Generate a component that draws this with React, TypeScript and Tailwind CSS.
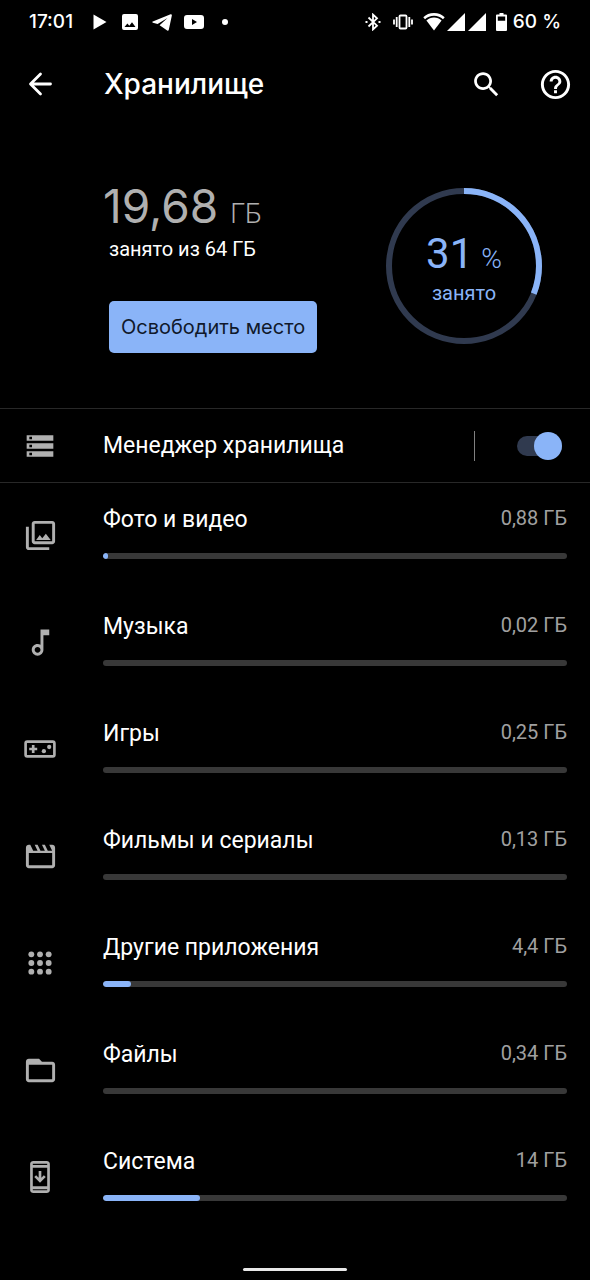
import React, { useState } from 'react';

type IconProps = { className?: string; children: React.ReactNode };

const Icon: React.FC<IconProps> = ({ className = 'size-8', children }) => (
  <svg viewBox="0 0 24 24" fill="currentColor" className={className} aria-hidden="true">
    {children}
  </svg>
);

const categories = [
  {
    name: 'Фото и видео',
    size: '0,88 ГБ',
    percent: 1,
    iconSize: 'size-[35px]',
    icon: (
      <path d="M20 4v12H8V4h12m0-2H8c-1.100 0-2 .9-2 2v12c0 1.100.9 2 2 2h12c1.100 0 2-.9 2-2V4c0-1.100-.9-2-2-2zm-8.500 9.670 1.690 2.260 2.480-3.100L19 15H9zM2 6v14c0 1.100.9 2 2 2h14v-2H4V6H2z" />
    ),
  },
  {
    name: 'Музыка',
    size: '0,02 ГБ',
    percent: 0,
    iconSize: 'size-[35px]',
    icon: (
      <path d="M12 3v10.550c-.59-.34-1.270-.55-2-.55-2.210 0-4 1.790-4 4s1.790 4 4 4 4-1.790 4-4V7h4V3h-6zm-2 16c-1.100 0-2-.9-2-2s.9-2 2-2 2 .9 2 2-.9 2-2 2z" />
    ),
  },
  {
    name: 'Игры',
    size: '0,25 ГБ',
    percent: 0,
    iconSize: 'size-8',
    icon: (
      <>
        <rect x="1.200" y="6.500" width="21.600" height="11" rx="1.200" fill="none" stroke="currentColor" strokeWidth="2" />
        <path d="M5.900 9h2v2h2v2h-2v2h-2v-2h-2v-2h2z" />
        <circle cx="14.900" cy="13.600" r="1.600" />
        <circle cx="18.900" cy="10.500" r="1.600" />
      </>
    ),
  },
  {
    name: 'Фильмы и сериалы',
    size: '0,13 ГБ',
    percent: 0,
    iconSize: 'size-[35px]',
    icon: (
      <path d="M18 4l2 4h-3l-2-4h-2l2 4h-3l-2-4H8l2 4H7L5 4H4c-1.100 0-1.990.9-1.990 2L2 18c0 1.100.9 2 2 2h16c1.100 0 2-.9 2-2V6c0-1.100-.9-2-2-2h-2zm2 14H4V9.600h16V18z" />
    ),
  },
  {
    name: 'Другие приложения',
    size: '4,4 ГБ',
    percent: 6,
    iconSize: 'size-8',
    icon: (
      <>
        {[5.5, 12, 18.5].map((cy) =>
          [5.5, 12, 18.5].map((cx) => <circle key={`${cx}-${cy}`} cx={cx} cy={cy} r="2.200" />)
        )}
      </>
    ),
  },
  {
    name: 'Файлы',
    size: '0,34 ГБ',
    percent: 0,
    iconSize: 'size-[35px]',
    icon: (
      <path d="M20 6h-7l-2-2H4c-1.100 0-1.990.9-1.990 2L2 18c0 1.100.9 2 2 2h16c1.100 0 2-.9 2-2V8c0-1.100-.9-2-2-2zm0 12H4V8h16v10z" />
    ),
  },
  {
    name: 'Система',
    size: '14 ГБ',
    percent: 21,
    iconSize: 'size-8',
    icon: (
      <>
        <path
          fillRule="evenodd"
          d="M17 0H7C5.700 0 4.600.9 4.600 2v20c0 1.100 1.100 2 2.400 2h10c1.300 0 2.400-.9 2.400-2V2c0-1.100-1.100-2-2.400-2zm.4 22H6.600v-.9h10.800zm0-3H6.600V5h10.800zm0-16H6.600v-.9h10.800z"
        />
        <path d="M11 7.500h2v5l1.900-1.900 1.400 1.400-4.300 4.300L7.700 12l1.400-1.400 1.900 1.900z" />
      </>
    ),
  },
];

const StatusBar: React.FC = () => (
  <div className="flex h-11 items-center justify-between px-[29px] font-['Inter',sans-serif] text-[19px] font-medium">
    <div className="flex items-center">
      <span>17:01</span>
      <svg viewBox="0 0 14 16" className="ml-5 h-4 w-3.5" fill="currentColor" aria-hidden="true">
        <path d="M.5.5v15L13.500 8z" />
      </svg>
      <svg viewBox="0 0 16 16" className="ml-[15px] size-4" fill="currentColor" aria-hidden="true">
        <path fillRule="evenodd" d="M2 0h12a2 2 0 0 1 2 2v12a2 2 0 0 1-2 2H2a2 2 0 0 1-2-2V2a2 2 0 0 1 2-2zm.5 13h11L10 8.200l-2.700 3.500-1.900-2.300z" />
      </svg>
      <svg viewBox="0 0 20 17" className="ml-3.5 h-[17px] w-5" fill="currentColor" aria-hidden="true">
        <path d="M.8 7.500 18.600.3c.8-.3 1.500.2 1.200 1.400l-3 14.100c-.2 1-.9 1.200-1.600.8L7.600 11.200 15.500 4 5.600 10.100.9 8.700c-.9-.3-.9-.9-.1-1.200z" />
      </svg>
      <svg viewBox="0 0 20 14" className="ml-3 h-3.5 w-5" fill="currentColor" aria-hidden="true">
        <path fillRule="evenodd" d="M3 0h14c2 0 3 1 3 3v8c0 2-1 3-3 3H3c-2 0-3-1-3-3V3c0-2 1-3 3-3zm5 4v6l5-3z" />
      </svg>
      <span className="ml-[18px] size-1.5 rounded-full bg-white" />
    </div>
    <div className="flex items-center">
      <svg viewBox="0 0 16 18" className="h-[18px] w-4" fill="none" stroke="currentColor" strokeWidth="1.800" aria-hidden="true">
        <path d="M3.500 4.500 12 12.700 8 16.400V1.600l4 3.700-8.500 8.200" />
        <path d="M.5 9h2M13.500 9h2" />
      </svg>
      <svg viewBox="0 0 20 16" className="ml-3 h-4 w-5" fill="none" stroke="currentColor" strokeWidth="1.800" aria-hidden="true">
        <rect x="6.500" y="1.500" width="7" height="13" rx="1" />
        <path d="M3.700 3v10M16.300 3v10M1 5.500v5M19 5.500v5" />
      </svg>
      <svg viewBox="0 0 22 18" className="ml-2.5 h-[18px] w-[22px]" fill="currentColor" aria-hidden="true">
        <path d="M11 0C6.800 0 3 1.500.3 4.200l1.700 2C4.300 4 7.500 2.700 11 2.700S17.700 4 20 6.200l1.700-2C19 1.500 15.200 0 11 0z" />
        <path d="M11 4.500c-2.900 0-5.500 1-7.600 2.900L11 17.500l7.600-10.100C16.500 5.500 13.900 4.500 11 4.500z" />
      </svg>
      <svg viewBox="0 0 18 18" className="ml-0.5 size-[18px]" fill="currentColor" aria-hidden="true">
        <path d="M18 0v18H0z" />
      </svg>
      <svg viewBox="0 0 18 18" className="ml-[3px] size-[18px]" fill="currentColor" aria-hidden="true">
        <path d="M18 0v18H0z" />
      </svg>
      <svg viewBox="0 0 11 18" className="ml-2.5 h-[18px] w-[11px]" fill="currentColor" aria-hidden="true">
        <path fillRule="evenodd" d="M3.500 0h4v1.500H10a1 1 0 0 1 1 1V17a1 1 0 0 1-1 1H1a1 1 0 0 1-1-1V2.500a1 1 0 0 1 1-1h2.500zM1.800 3.500v4.300h7.400V3.500z" />
      </svg>
      <span className="ml-1.5">60 %</span>
    </div>
  </div>
);

const Header: React.FC = () => (
  <header className="flex h-20 items-center pl-6 pr-[17px]">
    <button aria-label="Назад">
      <svg viewBox="0 0 32 32" className="size-8" fill="none" stroke="currentColor" strokeWidth="2.800" strokeLinecap="round" strokeLinejoin="round" aria-hidden="true">
        <path d="M26.500 16H7M16.500 6 6.500 16l10 10" />
      </svg>
    </button>
    <h1 className="ml-12 flex-1 font-['Inter',sans-serif] text-[28px] font-medium leading-9">Хранилище</h1>
    <button aria-label="Поиск">
      <Icon className="size-[33px]">
        <path d="M15.500 14h-.79l-.28-.27C15.410 12.590 16 11.110 16 9.500 16 5.910 13.090 3 9.500 3S3 5.910 3 9.500 5.910 16 9.500 16c1.610 0 3.090-.59 4.230-1.570l.27.28v.79l5 4.990L20.490 19l-4.990-5zm-6 0C7.010 14 5 11.990 5 9.500S7.010 5 9.500 5 14 7.010 14 9.500 11.990 14 9.500 14z" />
      </Icon>
    </button>
    <button aria-label="Справка" className="ml-[35px]">
      <Icon className="size-[35px]">
        <path d="M11 18h2v-2h-2v2zm1-16C6.480 2 2 6.480 2 12s4.480 10 10 10 10-4.480 10-10S17.520 2 12 2zm0 18c-4.410 0-8-3.590-8-8s3.590-8 8-8 8 3.590 8 8-3.590 8-8 8zm0-14c-2.210 0-4 1.790-4 4h2c0-1.100.9-2 2-2s2 .9 2 2c0 2-3 1.750-3 5h2c0-2.250 3-2.500 3-5 0-2.210-1.790-4-4-4z" />
      </Icon>
    </button>
  </header>
);

const UsageRing: React.FC<{ percent: number }> = ({ percent }) => (
  <div className="relative size-[156px] text-[#8ab4f8]">
    <svg viewBox="0 0 156 156" className="size-full -rotate-90" fill="none" strokeWidth="6" aria-hidden="true">
      <circle cx="78" cy="78" r="75" stroke="#303a4f" />
      <circle cx="78" cy="78" r="75" stroke="#8ab4f8" pathLength="100" strokeDasharray={`${percent} 100`} />
    </svg>
    <div className="absolute inset-0 flex flex-col items-center justify-center pt-2">
      <p className="flex items-baseline gap-2 text-[42px] leading-10">
        {percent}
        <span className="text-[28px] font-light">%</span>
      </p>
      <p className="text-[20px] leading-7">занято</p>
    </div>
  </div>
);

const Summary: React.FC = () => (
  <section className="flex h-[284px] items-start justify-between pl-[103px] pr-12 pt-[52px]">
    <div>
      <p className="flex items-baseline gap-3 text-[#b0b0b0]">
        <span className="font-['Inter',sans-serif] text-[46px] leading-[60px]">19,68</span>
        <span className="text-[27px] font-light">ГБ</span>
      </p>
      <p className="ml-1.5 -mt-px text-[20px] leading-7">занято из 64 ГБ</p>
      <button className="ml-1.5 mt-[38px] h-[52px] rounded-[5px] bg-[#8ab4f8] px-3 font-['Inter',sans-serif] text-[20px] text-[#10192b]">
        Освободить место
      </button>
    </div>
    <div className="mt-3">
      <UsageRing percent={31} />
    </div>
  </section>
);

const StorageManager: React.FC = () => {
  const [enabled, setEnabled] = useState(true);

  return (
    <section className="flex h-[75px] items-center border-y border-[#282828] pl-6 pr-7">
      <Icon className="size-8 text-[#b0b0b0]">
        <path d="M2 20h20v-4H2v4zm2-3h2v2H4v-2zM2 4v4h20V4H2zm4 3H4V5h2v2zm-4 7h20v-4H2v4zm2-3h2v2H4v-2z" />
      </Icon>
      <label htmlFor="storage-manager" className="ml-[47px] flex-1 text-[23px] leading-8">
        Менеджер хранилища
      </label>
      <span className="h-[30px] w-px bg-[#808080]" />
      <input
        id="storage-manager"
        type="checkbox"
        role="switch"
        checked={enabled}
        onChange={(e) => setEnabled(e.target.checked)}
        className="relative ml-[42px] h-5 w-[45px] appearance-none rounded-full bg-[#303a4f] before:absolute before:-top-1 before:left-0 before:size-7 before:rounded-full before:bg-[#b0b0b0] checked:before:left-[17px] checked:before:bg-[#8ab4f8]"
      />
    </section>
  );
};

const CategoryList: React.FC = () => (
  <ul>
    {categories.map((item) => (
      <li key={item.name} className="flex h-[107px] items-start pl-[22px] pr-[23px]">
        <div className="mt-[34px] flex size-9 shrink-0 items-center justify-center text-[#b0b0b0]">
          <Icon className={item.iconSize}>{item.icon}</Icon>
        </div>
        <div className="ml-[45px] flex-1 pt-[21px]">
          <div className="flex items-start justify-between">
            <h2 className="text-[23px] leading-8">{item.name}</h2>
            <span className="text-[20px] leading-7 text-[#a0a0a0]">{item.size}</span>
          </div>
          <div
            role="progressbar"
            aria-label={item.name}
            aria-valuenow={item.percent}
            className="mt-[17px] h-1.5 overflow-hidden rounded-full bg-[#383838]"
          >
            <div className="h-full rounded-full bg-[#8ab4f8]" style={{ width: `${item.percent}%` }} />
          </div>
        </div>
      </li>
    ))}
  </ul>
);

const App: React.FC = () => (
  <div className="flex min-h-screen flex-col bg-black font-['Roboto',sans-serif] text-white">
    <StatusBar />
    <Header />
    <main className="flex-1">
      <Summary />
      <StorageManager />
      <CategoryList />
    </main>
    <div className="flex justify-center pb-[9px]">
      <span className="h-[3px] w-[104px] rounded-full bg-[#e8e8e8]" />
    </div>
  </div>
);

export default App;
